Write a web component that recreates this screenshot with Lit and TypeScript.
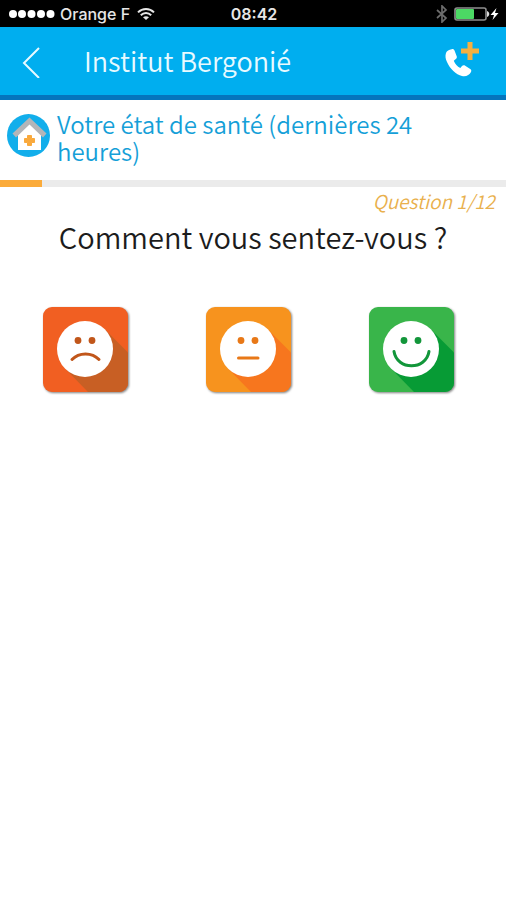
import { LitElement, html, css, svg } from "lit";
import { customElement, property, state } from "lit/decorators.js";

type Mood = "sad" | "neutral" | "happy";

const moods: { id: Mood; label: string }[] = [
  { id: "sad", label: "Mal" },
  { id: "neutral", label: "Moyen" },
  { id: "happy", label: "Bien" },
];

const palette: Record<Mood, { tile: string; shade: string; ink: string }> = {
  sad: { tile: "#f15f22", shade: "#c85f24", ink: "#c1561a" },
  neutral: { tile: "#f7931e", shade: "#f7761e", ink: "#e87817" },
  happy: { tile: "#39b54a", shade: "#079b35", ink: "#12963a" },
};

const mouths: Record<Mood, string> = {
  sad: "M29 52.5C36 45 49 45 56 52.5",
  neutral: "M32.500 51H52",
  happy: "M25 44.500C28 63.500 57 63.500 60 44.500",
};

@customElement("status-bar")
class StatusBar extends LitElement {
  static styles = css`
    :host {
      display: grid;
      grid-template-columns: 1fr auto 1fr;
      align-items: center;
      height: 27px;
      padding: 0 6px 0 8px;
      background: #000;
      color: #e6e6e6;
      font: 500 16px/28px Inter, "Liberation Sans", sans-serif;
    }
    .carrier,
    .power {
      display: flex;
      align-items: center;
      gap: 5px;
    }
    .power {
      justify-content: flex-end;
    }
    .clock {
      font-weight: 600;
    }
    svg {
      display: block;
    }
  `;

  render() {
    return html`
      <div class="carrier">
        <svg width="47" height="10" viewBox="0 0 47 10" fill="#fff" aria-hidden="true">
          ${[5, 14, 23.5, 33, 42.5].map((x) => svg`<circle cx=${x} cy="5" r="4"/>`)}
        </svg>
        <span>Orange F</span>
        <svg width="20" height="14" viewBox="0 0 20 14" fill="none" stroke="#e6e6e6" stroke-width="2" aria-hidden="true">
          <path d="M3 5.400C7.500.8 14.500.8 19 5.400M5.800 8.200c3-3 7.400-3 10.400 0" />
          <path d="M11 13 8 10.300c1.800-1.500 4.200-1.500 6 0Z" fill="#e6e6e6" stroke="none" />
        </svg>
      </div>
      <span class="clock">08:42</span>
      <div class="power">
        <svg width="12" height="18" viewBox="0 0 12 18" fill="none" stroke="#6c6c6c" stroke-width="1.7" aria-hidden="true">
          <path d="m1 5 9 8-4 4V1l4 4-9 8" />
        </svg>
        <svg width="47" height="16" viewBox="0 0 47 16" aria-hidden="true">
          <rect x="2" y="2" width="31" height="12" rx="2" fill="none" stroke="#8e8e8e" stroke-width="1.6" />
          <rect x="3" y="3" width="18" height="10" rx="1" fill="#4cd964" />
          <path d="M34 5c3 1 3 5 0 6Z" fill="#ddd" />
          <path d="m43.500 2-6 7h3.500l-1.500 5 6-7h-3.500Z" fill="#fff" />
        </svg>
      </div>
    `;
  }
}

@customElement("mood-face")
class MoodFace extends LitElement {
  @property() mood: Mood = "neutral";

  static styles = css`
    :host {
      display: block;
    }
    svg {
      display: block;
      overflow: visible;
      filter: drop-shadow(1px 1px 1px rgba(0, 0, 0, 0.5));
    }
  `;

  render() {
    const { tile, shade, ink } = palette[this.mood];
    return html`
      <svg width="86" height="85" viewBox="0 0 86 85" aria-hidden="true">
        <rect width="85" height="85" rx="9" fill=${tile} />
        <path d="M62 22.500 85 45.500V76a9 9 0 0 1-9 9H45L22.500 62Z" fill=${shade} />
        <circle cx="42" cy="42" r="28" fill="#fff" />
        <circle cx="35" cy="33.500" r="3.400" fill=${ink} />
        <circle cx="49" cy="33.500" r="3.400" fill=${ink} />
        <path d=${mouths[this.mood]} fill="none" stroke=${ink} stroke-width="3" stroke-linecap="round" />
      </svg>
    `;
  }
}

@customElement("app-root")
class AppRoot extends LitElement {
  @state() private question = 1;
  @state() private total = 12;
  @state() private answer?: Mood;

  static styles = css`
    :host {
      display: block;
      min-height: 100vh;
      background: #fff;
      color: #1c1c1c;
      font-family: "Noto Sans CJK SC", "Noto Sans", sans-serif;
    }
    button {
      display: block;
      padding: 0;
      border: 0;
      background: none;
      cursor: pointer;
    }
    svg {
      display: block;
    }
    .header {
      display: flex;
      align-items: center;
      height: 68px;
      padding: 0 25px 0 20px;
      border-bottom: 5px solid #0575bd;
      background: #00aeef;
      color: #e8faff;
    }
    .header h1 {
      flex: 1;
      margin: 0 0 0 40px;
      font-size: 27px;
      font-weight: 350;
      line-height: 40px;
    }
    .topic {
      display: flex;
      gap: 7px;
      padding: 10px 48px 16px 7px;
    }
    .topic svg {
      flex: none;
      margin-top: 4px;
    }
    .topic h2 {
      margin: 0;
      color: #159fd8;
      font-size: 24px;
      font-weight: 350;
      line-height: 27px;
    }
    .track {
      height: 7px;
      background: #ebebeb;
    }
    .fill {
      height: 100%;
      background: #fbab3a;
    }
    .count {
      margin: 0;
      padding: 2px 11px 0;
      color: #e9b04d;
      font-size: 19px;
      font-style: italic;
      font-weight: 350;
      line-height: 24px;
      text-align: right;
    }
    .prompt {
      margin: 0;
      padding: 3px 10px 0;
      font-size: 29px;
      font-weight: 350;
      line-height: 40px;
      text-align: center;
    }
    .answers {
      display: flex;
      justify-content: space-between;
      padding: 51px 51px 24px 43px;
    }
  `;

  render() {
    return html`
      <status-bar></status-bar>
      <header class="header">
        <button aria-label="Retour">
          <svg width="24" height="34" viewBox="0 0 24 34" fill="none" stroke="#e8faff" stroke-width="2">
            <path d="M19 4 4 19 19 34" />
          </svg>
        </button>
        <h1>Institut Bergonié</h1>
        <button aria-label="Appeler">
          <svg width="38" height="38" viewBox="0 0 38 38">
            <path
              d="M3 11c-1 3-.5 6 1 9 3 7 9 12.500 15 14 4 .8 7.500-.8 9-4 .6-1.300.3-2.300-.8-3l-5-3.300c-1.200-.8-2.400-.6-3.200.3l-1.700 2c-3-1.500-5.300-4.200-6.500-7.300l2-1.700c1-.8 1.300-1.700.9-2.800L11.500 8.600c-.4-1.200-1.500-1.800-2.800-1.400C6 7.800 3.800 8.700 3 11Z"
              fill="#fff"
            />
            <path d="M24.500 0h5v6.500H36v5h-6.500V18h-5v-6.500H18v-5h6.500Z" fill="#f5b041" />
          </svg>
        </button>
      </header>
      <main>
        <section class="topic">
          <svg width="43" height="43" viewBox="0 0 43 43" aria-hidden="true">
            <circle cx="21.500" cy="21.500" r="21.500" fill="#12aeeb" />
            <path d="M11 19 22 8l12 11v17H11Z" fill="#fff" />
            <path d="M22.500 3.500 39.500 19.500l-3.500 4-13.500-13L9 23.500l-3.500-4Z" fill="#b3b5b8" />
            <path
              d="M20.500 21.500h4v3h3v4h-3v3h-4v-3h-3v-4h3Z"
              fill="#f9a93c"
              stroke="#f9a93c"
              stroke-linejoin="round"
            />
          </svg>
          <h2>Votre état de santé (dernières 24 heures)</h2>
        </section>
        <div
          class="track"
          role="progressbar"
          aria-label="Progression"
          aria-valuenow=${this.question}
          aria-valuemax=${this.total}
        >
          <div class="fill" style="width: ${(this.question / this.total) * 100}%"></div>
        </div>
        <p class="count">Question ${this.question}/${this.total}</p>
        <h2 class="prompt" id="prompt">Comment vous sentez-vous ?</h2>
        <div class="answers" role="group" aria-labelledby="prompt">
          ${moods.map(
            ({ id, label }) => html`
              <button
                aria-label=${label}
                aria-pressed=${this.answer === id}
                @click=${() => (this.answer = id)}
              >
                <mood-face .mood=${id}></mood-face>
              </button>
            `
          )}
        </div>
      </main>
    `;
  }
}
